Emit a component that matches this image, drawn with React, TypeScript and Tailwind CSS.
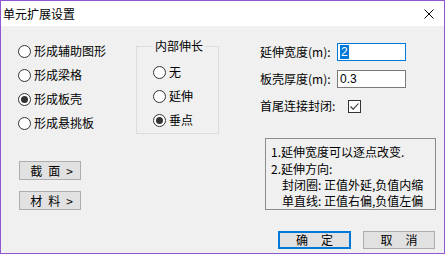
import React from 'react';

// ── Dialog: 单元扩展设置 ─────────────────────────────────────────────────────
const FONT = { fontFamily: '"Noto Sans CJK SC", "Liberation Sans", sans-serif' };

const Radio: React.FC<{ label: string; checked?: boolean }> = ({ label, checked }) => (
    <div className="flex items-center h-[24px] gap-[3px]">
        <span className="w-[13px] h-[13px] rounded-full border border-[#333333] bg-white flex items-center justify-center shrink-0">
            {checked && <span className="w-[7px] h-[7px] rounded-full bg-[#333333]" />}
        </span>
        <span className="text-[12px] leading-[16px] text-black">{label}</span>
    </div>
);

const SmallButton: React.FC<{ chars: string[] }> = ({ chars }) => (
    <div className="w-[62px] h-[19px] border border-[#adadad] bg-[#e1e1e1] flex items-center justify-center gap-[6px] text-[12px] leading-[16px] text-black pl-[3px]">
        {chars.map((c, i) => (
            <span key={i}>{c}</span>
        ))}
    </div>
);

export default function App() {
    return (
        <div className="w-[445px] h-[254px] border border-[#9057d2] bg-[#f0f0f0] flex flex-col" style={FONT}>
            {/* title bar */}
            <div className="h-[25px] bg-white flex items-center justify-between pl-[2px] pr-[10px] shrink-0">
                <span className="text-[12px] leading-[16px] text-black">单元扩展设置</span>
                <svg width="10" height="10" viewBox="0 0 10 10">
                    <path d="M0.5 0.5 L9.5 9.5 M9.5 0.5 L0.5 9.5" stroke="#000" strokeWidth="1" />
                </svg>
            </div>

            <div className="flex flex-1">
                {/* left column */}
                <div className="w-[135px] pl-[17px] pt-[13px] flex flex-col shrink-0">
                    <Radio label="形成辅助图形" />
                    <Radio label="形成梁格" />
                    <Radio label="形成板壳" checked />
                    <Radio label="形成悬挑板" />
                    <div className="mt-[26px] ml-[1px] flex flex-col gap-[11px]">
                        <SmallButton chars={['截', '面', '>']} />
                        <SmallButton chars={['材', '料', '>']} />
                    </div>
                </div>

                {/* group box */}
                <div className="w-[83px] pt-[12px] shrink-0">
                    <fieldset className="border border-[#dcdcdc] h-[96px] pl-[16px] pt-[6px] m-0">
                        <legend className="px-[2px] text-[12px] leading-[16px] text-black">内部伸长</legend>
                        <Radio label="无" />
                        <Radio label="延伸" />
                        <Radio label="垂点" checked />
                    </fieldset>
                </div>

                {/* right column */}
                <div className="w-[176px] ml-[41px] pt-[17px] flex flex-col shrink-0">
                    <div className="flex items-center h-[18px]">
                        <span className="w-[77px] text-[12px] leading-[16px] text-black">延伸宽度(m):</span>
                        <div className="w-[69px] h-[18px] border border-[#0078d7] bg-white flex items-center pl-[2px]">
                            <span className="bg-[#0078d7] text-white text-[12px] leading-[14px] px-[1px]" style={{ fontFamily: '"Liberation Sans", sans-serif' }}>2</span>
                        </div>
                    </div>
                    <div className="flex items-center h-[18px] mt-[9px]">
                        <span className="w-[77px] text-[12px] leading-[16px] text-black">板壳厚度(m):</span>
                        <div className="w-[69px] h-[18px] border border-[#7a7a7a] bg-white flex items-center pl-[2px] text-[12px] text-black" style={{ fontFamily: '"Liberation Sans", sans-serif' }}>
                            0.3
                        </div>
                    </div>
                    <div className="flex items-center h-[18px] mt-[9px]">
                        <span className="w-[88px] text-[12px] leading-[16px] text-black">首尾连接封闭:</span>
                        <span className="w-[13px] h-[13px] border border-[#333333] bg-white flex items-center justify-center">
                            <svg width="11" height="11" viewBox="0 0 11 11">
                                <path d="M1.5 5.5 L4.2 8.2 L9.5 2.5" stroke="#333" strokeWidth="1.1" fill="none" />
                            </svg>
                        </span>
                    </div>

                    <div className="mt-[23px] ml-[5px] w-[171px] h-[72px] border border-[#8c8c8c] pl-[5px] pt-[5px] text-[12px] leading-[16px] text-black whitespace-nowrap">
                        <div className="mb-[1px]">1.延伸宽度可以逐点改变.</div>
                        <div>2.延伸方向:</div>
                        <div className="pl-[11px]">封闭圈: 正值外延,负值内缩</div>
                        <div className="pl-[11px]">单直线: 正值右偏,负值左偏</div>
                    </div>

                    <div className="mt-[21px] ml-[18px] flex gap-[12px]">
                        <div className="w-[73px] h-[18px] border-2 border-[#0078d7] bg-[#e1e1e1] flex items-center justify-center gap-[13px] text-[12px] leading-[16px] text-black">
                            <span>确</span>
                            <span>定</span>
                        </div>
                        <div className="w-[72px] h-[18px] border border-[#adadad] bg-[#e1e1e1] flex items-center justify-center gap-[13px] text-[12px] leading-[16px] text-black">
                            <span>取</span>
                            <span>消</span>
                        </div>
                    </div>
                </div>
            </div>
        </div>
    );
}
